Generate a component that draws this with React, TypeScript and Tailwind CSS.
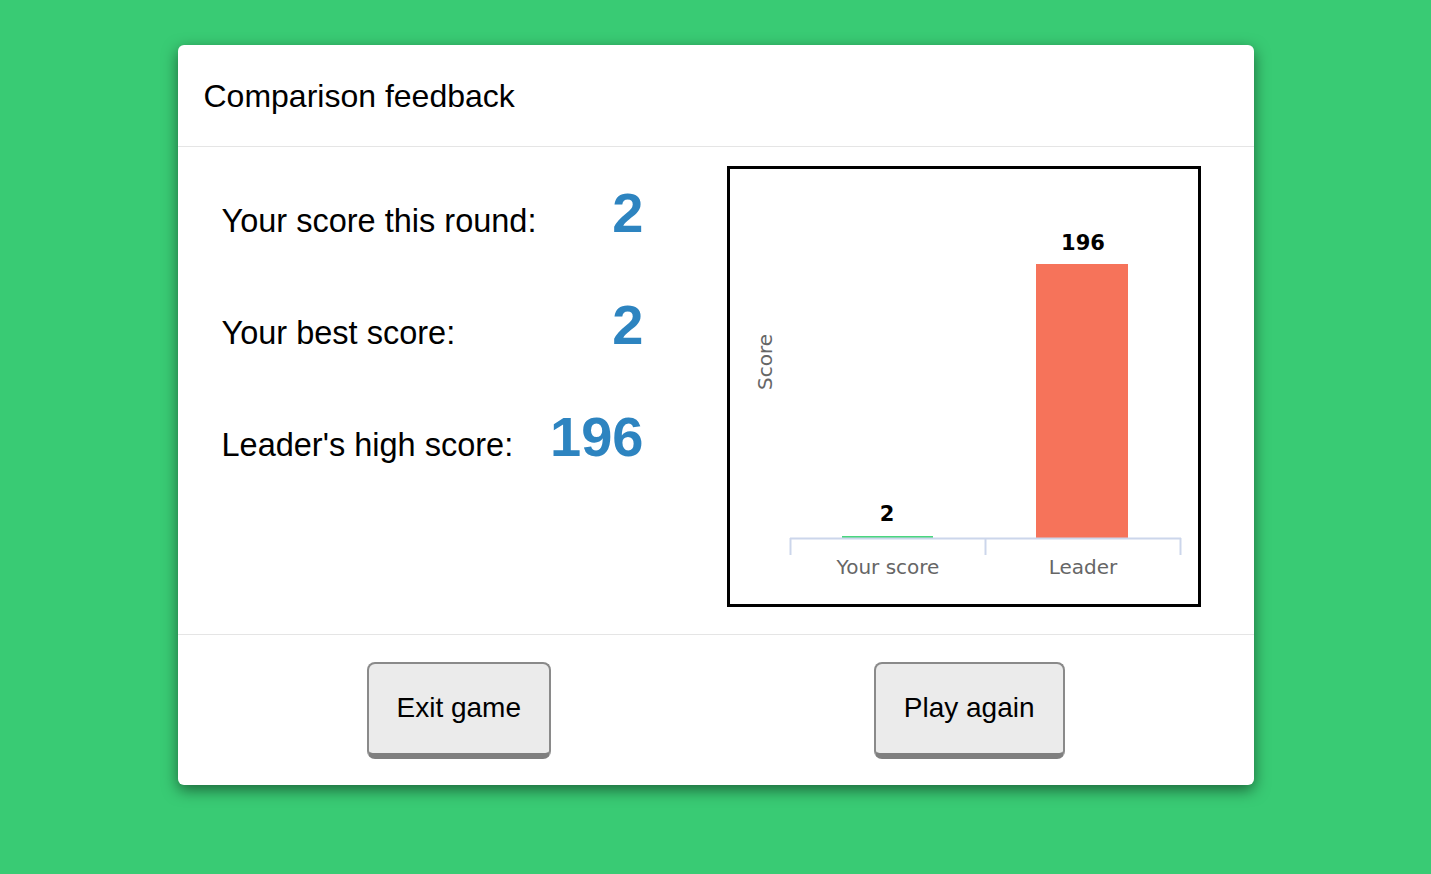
import React from "react";

const rows = [
  { label: "Your score this round:", value: "2" },
  { label: "Your best score:", value: "2" },
  { label: "Leader's high score:", value: "196" },
];

function ScoreChart() {
  const font = "'DejaVu Sans', Verdana, sans-serif";
  return (
    <svg width="468" height="435" viewBox="0 0 468 435" className="block">
      {/* y axis title */}
      <text
        x="35"
        y="193"
        transform="rotate(-90 35 193)"
        textAnchor="middle"
        dominantBaseline="central"
        fill="#666666"
        fontSize="20"
        fontFamily={font}
      >
        Score
      </text>

      {/* bars */}
      <rect x="112" y="367" width="91" height="2" fill="#4ad67f" />
      <rect x="306" y="95" width="92" height="274" fill="#f6735a" />

      {/* data labels */}
      <text x="157" y="352" textAnchor="middle" fill="#000" fontSize="21" fontWeight="bold" fontFamily={font}>
        2
      </text>
      <text x="353" y="81" textAnchor="middle" fill="#000" fontSize="21" fontWeight="bold" fontFamily={font}>
        196
      </text>

      {/* x axis */}
      <line x1="60" y1="369.5" x2="451" y2="369.5" stroke="#ccd6eb" strokeWidth="2" />
      <line x1="60.5" y1="369" x2="60.5" y2="386" stroke="#ccd6eb" strokeWidth="2" />
      <line x1="255.5" y1="369" x2="255.5" y2="386" stroke="#ccd6eb" strokeWidth="2" />
      <line x1="450.5" y1="369" x2="450.5" y2="386" stroke="#ccd6eb" strokeWidth="2" />

      <text x="158" y="405" textAnchor="middle" fill="#666666" fontSize="20" fontFamily={font}>
        Your score
      </text>
      <text x="353" y="405" textAnchor="middle" fill="#666666" fontSize="20" fontFamily={font}>
        Leader
      </text>
    </svg>
  );
}

function GameButton({ children }: { children: React.ReactNode }) {
  return (
    <button className="h-[97px] rounded-[8px] border-2 border-b-[6px] border-[#8a8a8a] border-b-[#7f7f7f] bg-[#ebebeb] px-[28px] text-[28px] leading-none text-black">
      {children}
    </button>
  );
}

export default function App() {
  return (
    <div className="min-h-[874px] w-full bg-[#39cb74] pt-[45px] font-['Liberation_Sans',Arial,sans-serif]">
      <div className="mx-auto w-[1076px] rounded-[6px] bg-white shadow-[0_5px_15px_rgba(0,0,0,0.5)]">
        {/* Header */}
        <div className="flex h-[102px] items-center border-b border-[#e5e5e5] px-[26px]">
          <h4 className="text-[32px] leading-none text-black">Comparison feedback</h4>
        </div>

        {/* Body */}
        <div className="flex pb-[27px] pl-[44px] pr-[53px] pt-[19px]">
          <div className="flex w-[422px] flex-col gap-[56px] pt-[19px]">
            {rows.map((r) => (
              <div key={r.label} className="flex items-baseline justify-between leading-none">
                <span className="text-[32.5px] text-black">{r.label}</span>
                <span className="text-[56px] font-bold text-[#2d84c0]">{r.value}</span>
              </div>
            ))}
          </div>
          <div className="ml-[83px] h-[441px] w-[474px] border-[3px] border-black">
            <ScoreChart />
          </div>
        </div>

        {/* Footer */}
        <div className="flex h-[151px] items-center justify-between border-t border-[#e5e5e5] px-[189px]">
          <GameButton>Exit game</GameButton>
          <GameButton>Play again</GameButton>
        </div>
      </div>
    </div>
  );
}
